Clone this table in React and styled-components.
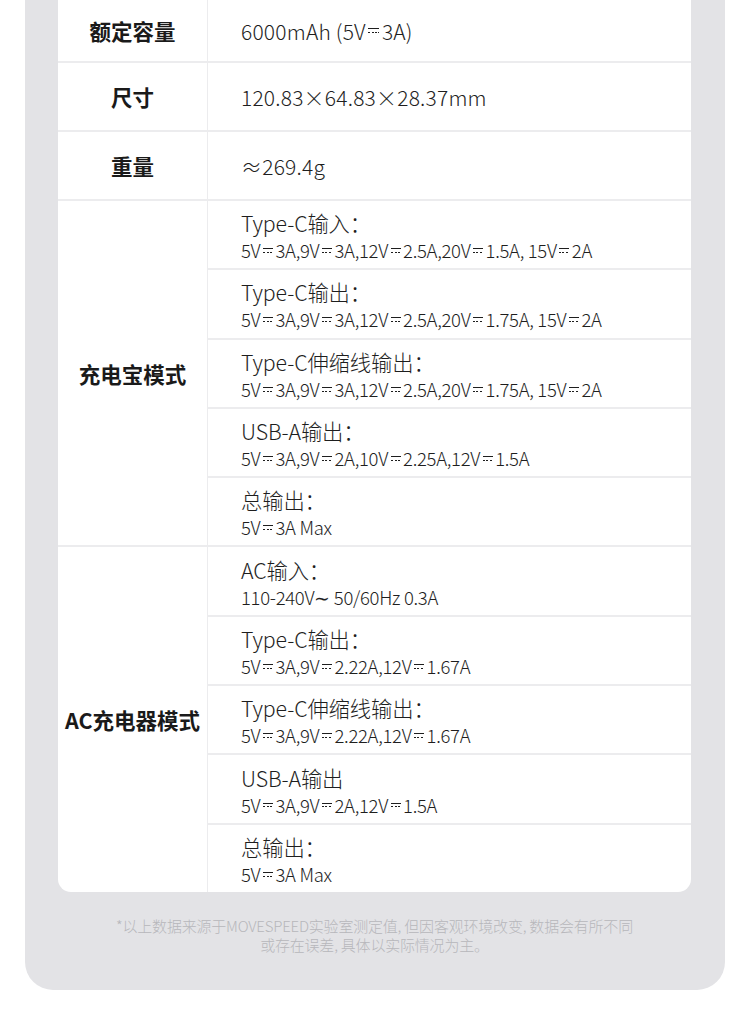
import React from 'react'
import styled, { createGlobalStyle } from 'styled-components'

const specs = [
  { label: '额定容量', value: ['6000mAh (5V', 'DC', '3A)'], h: 63 },
  { label: '尺寸', value: ['120.83×64.83×28.37mm'], h: 69 },
  { label: '重量', value: ['≈269.4g'], h: 69 },
]

const groups = [
  {
    label: '充电宝模式',
    items: [
      { title: 'Type-C输入：', detail: '5V~3A,9V~3A,12V~2.5A,20V~1.5A, 15V~2A' },
      { title: 'Type-C输出：', detail: '5V~3A,9V~3A,12V~2.5A,20V~1.75A, 15V~2A' },
      { title: 'Type-C伸缩线输出：', detail: '5V~3A,9V~3A,12V~2.5A,20V~1.75A, 15V~2A' },
      { title: 'USB-A输出：', detail: '5V~3A,9V~2A,10V~2.25A,12V~1.5A' },
      { title: '总输出：', detail: '5V~3A Max' },
    ],
  },
  {
    label: 'AC充电器模式',
    items: [
      { title: 'AC输入：', detail: '110-240V\u223C 50/60Hz 0.3A', raw: true },
      { title: 'Type-C输出：', detail: '5V~3A,9V~2.22A,12V~1.67A' },
      { title: 'Type-C伸缩线输出：', detail: '5V~3A,9V~2.22A,12V~1.67A' },
      { title: 'USB-A输出', detail: '5V~3A,9V~2A,12V~1.5A' },
      { title: '总输出：', detail: '5V~3A Max' },
    ],
  },
]

// split "~" into the direct-current mark
function withDC(text, raw) {
  if (raw) return text
  const parts = text.split('~')
  return parts.map((p, i) => (
    <React.Fragment key={i}>
      {p}
      {i < parts.length - 1 && <DC />}
    </React.Fragment>
  ))
}

export default function App() {
  return (
    <>
      <Global />
      <Page>
        <Panel>
          <Card>
            {specs.map((s) => (
              <Row key={s.label} $h={s.h}>
                <Label>{s.label}</Label>
                <Value>
                  {s.value.map((v, i) => (v === 'DC' ? <DC key={i} $big /> : <span key={i}>{v}</span>))}
                </Value>
              </Row>
            ))}
            {groups.map((g) => (
              <Group key={g.label}>
                <Label>{g.label}</Label>
                <SubList>
                  {g.items.map((it, i) => (
                    <SubRow key={i}>
                      <SubTitle>{it.title}</SubTitle>
                      <Detail>{withDC(it.detail, it.raw)}</Detail>
                    </SubRow>
                  ))}
                </SubList>
              </Group>
            ))}
          </Card>
          <Note>
            *以上数据来源于MOVESPEED实验室测定值, 但因客观环境改变, 数据会有所不同
            <br />
            或存在误差, 具体以实际情况为主。
          </Note>
        </Panel>
      </Page>
    </>
  )
}

const Global = createGlobalStyle`
  html, body { margin: 0; padding: 0; background: #fff; }
  body { font-family: "Noto Sans CJK SC", "Noto Sans", sans-serif; color: #1e1e1e; }
`

const Page = styled.div`
  width: 750px;
  height: 1009px;
  padding: 0 25px;
  box-sizing: border-box;
  overflow: hidden;
`

const Panel = styled.div`
  background: #e3e3e6;
  border-radius: 0 0 28px 28px;
  padding: 0 34px 0 33px;
  height: 990px;
  box-sizing: border-box;
`

const Card = styled.div`
  background: #fff;
  border-radius: 0 0 13px 13px;
  overflow: hidden;
`

const Row = styled.div`
  display: grid;
  grid-template-columns: 150px 1fr;
  height: ${(p) => p.$h}px;
  border-bottom: 2px solid #ececee;
  box-sizing: border-box;
`

const Label = styled.div`
  display: flex;
  align-items: center;
  justify-content: center;
  border-right: 1px solid #ececee;
  font-size: 21.5px;
  font-weight: 700;
  color: #1a1a1a;
`

const Value = styled.div`
  display: flex;
  align-items: center;
  padding-left: 33px;
  font-size: 21px;
  font-weight: 300;
  letter-spacing: 0.2px;
  color: #1e1e1e;
  white-space: pre;
`

const Group = styled.div`
  display: grid;
  grid-template-columns: 150px 1fr;
  border-bottom: 2px solid #ececee;
  &:last-child { border-bottom: none; }
`

const SubList = styled.div`
  display: flex;
  flex-direction: column;
`

const SubRow = styled.div`
  height: 69.3px;
  box-sizing: border-box;
  padding: 5px 0 0 33px;
  border-bottom: 2px solid #ececee;
  display: flex;
  flex-direction: column;
  justify-content: center;
  &:last-child { border-bottom: none; height: 67.3px; }
`

const SubTitle = styled.div`
  font-size: 21.3px;
  font-weight: 300;
  line-height: 26px;
  letter-spacing: -0.1px;
  color: #1e1e1e;
`

const Detail = styled.div`
  font-size: 18.5px;
  font-weight: 300;
  line-height: 28px;
  letter-spacing: -0.3px;
  color: #1e1e1e;
  white-space: nowrap;
`

const DC = styled.span`
  display: inline-block;
  width: ${(p) => (p.$big ? 11 : 10)}px;
  height: 4px;
  margin: 0 2.5px;
  vertical-align: ${(p) => (p.$big ? 6 : 5)}px;
  border-top: 1.2px solid currentColor;
  background: repeating-linear-gradient(90deg, currentColor 0 2px, transparent 2px 3.5px) bottom / 100% 1.2px no-repeat;
`

const Note = styled.div`
  text-align: center;
  font-size: 15px;
  font-weight: 300;
  line-height: 19px;
  letter-spacing: -0.2px;
  color: #b7b7bb;
  padding-top: 24px;
`
